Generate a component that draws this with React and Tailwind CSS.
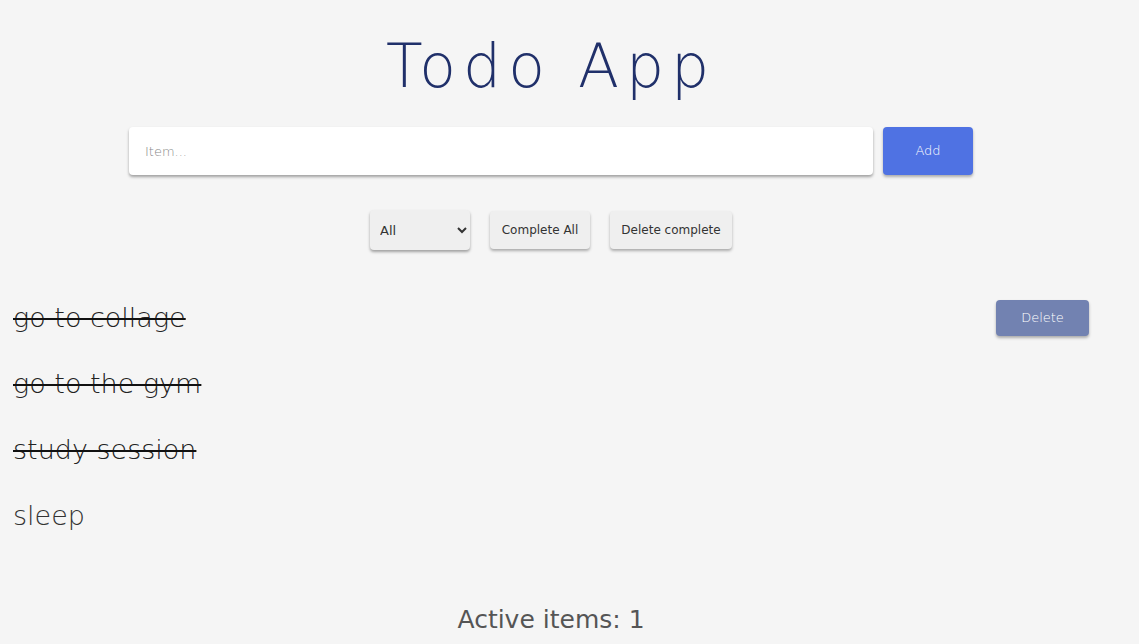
import { useState } from "react";

const initialTodos = [
  { id: 1, text: "go to collage", done: true },
  { id: 2, text: "go to the gym", done: true },
  { id: 3, text: "study session", done: true },
  { id: 4, text: "sleep", done: false },
];

export default function App() {
  const [todos, setTodos] = useState(initialTodos);
  const [filter, setFilter] = useState("all");
  const [value, setValue] = useState("");
  const [hovered, setHovered] = useState(1);

  const addTodo = () => {
    if (!value.trim()) return;
    setTodos([...todos, { id: Date.now(), text: value, done: false }]);
    setValue("");
  };

  const shown = todos.filter((t) =>
    filter === "all" ? true : filter === "done" ? t.done : !t.done
  );
  const active = todos.filter((t) => !t.done).length;

  return (
    <div className="min-h-screen bg-[#f5f5f5] font-['DejaVu_Sans',sans-serif] text-[#333]">
      <div className="w-[1102px] pt-[31px]">
        <h1 className="text-center text-[60px] leading-[70px] font-extralight tracking-[7px] text-[#20306a]">
          Todo App
        </h1>

        <div className="mt-[26px] flex justify-center gap-[10px]">
          <input
            value={value}
            onChange={(e) => setValue(e.target.value)}
            placeholder="Item..."
            className="h-[48px] w-[744px] rounded-[4px] bg-white px-[16px] text-[13px] font-extralight shadow-[0_2px_3px_rgba(0,0,0,0.35)] outline-none placeholder:text-[#888]"
          />
          <button
            onClick={addTodo}
            className="h-[48px] w-[90px] rounded-[4px] bg-[#4f72e3] text-[13px] font-extralight text-white shadow-[0_2px_3px_rgba(0,0,0,0.3)]"
          >
            Add
          </button>
        </div>

        <div className="mt-[35px] flex h-[40px] items-center justify-center gap-[20px]">
          <select
            value={filter}
            onChange={(e) => setFilter(e.target.value)}
            className="h-[40px] w-[100px] rounded-[4px] bg-[#efefef] px-[6px] text-[13px] text-[#333] shadow-[0_2px_3px_rgba(0,0,0,0.35)] outline-none"
          >
            <option value="all">All</option>
            <option value="active">Active</option>
            <option value="done">Done</option>
          </select>
          <button
            onClick={() => setTodos(todos.map((t) => ({ ...t, done: true })))}
            className="h-[38px] w-[100px] rounded-[4px] bg-[#efefef] text-[12px] text-[#333] shadow-[0_2px_3px_rgba(0,0,0,0.3)]"
          >
            Complete All
          </button>
          <button
            onClick={() => setTodos(todos.filter((t) => !t.done))}
            className="h-[38px] w-[122px] rounded-[4px] bg-[#efefef] text-[12px] text-[#333] shadow-[0_2px_3px_rgba(0,0,0,0.3)]"
          >
            Delete complete
          </button>
        </div>

        <ul className="mt-[35px]">
          {shown.map((todo) => (
            <li
              key={todo.id}
              onMouseEnter={() => setHovered(todo.id)}
              className="flex h-[66px] items-center justify-between pl-[13px] pr-[13px]"
            >
              <span
                onClick={() =>
                  setTodos(todos.map((t) => (t.id === todo.id ? { ...t, done: !t.done } : t)))
                }
                className={
                  todo.done
                    ? "cursor-pointer text-[27px] font-extralight text-[#222] line-through decoration-[#111] decoration-2"
                    : "cursor-pointer text-[27px] font-extralight text-[#333]"
                }
              >
                {todo.text}
              </span>
              {hovered === todo.id && (
                <button
                  onClick={() => setTodos(todos.filter((t) => t.id !== todo.id))}
                  className="h-[36px] w-[93px] rounded-[4px] bg-[#7282b1] text-[13px] font-extralight text-white shadow-[0_2px_3px_rgba(0,0,0,0.3)]"
                >
                  Delete
                </button>
              )}
            </li>
          ))}
        </ul>

        <p className="mt-[56px] text-center text-[25px] leading-[30px] text-[#555]">
          Active items: {active}
        </p>
      </div>
    </div>
  );
}
